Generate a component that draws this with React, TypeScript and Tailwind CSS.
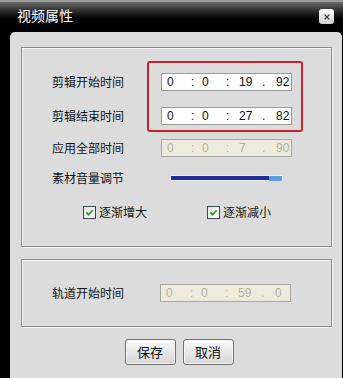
import type { ReactNode } from 'react';

const cjk = { fontFamily: '"Noto Sans CJK SC", "Liberation Sans", sans-serif' };
const num = { fontFamily: '"Liberation Sans", Arial, sans-serif' };

function TimeField({ parts, disabled }: { parts: string[]; disabled?: boolean }) {
  const [h, m, s, f] = parts;
  return (
    <div
      style={num}
      className={
        'flex h-[18px] w-[131px] items-center border text-[12px] leading-none ' +
        (disabled
          ? 'border-[#a8a8a0] bg-[#eeebdd] text-[#b3b0a4]'
          : 'border-[#9a9a9a] bg-white text-[#111]')
      }
    >
      <span className="w-[29px] pl-[5px]">{h}</span>
      <span className="w-[11px]">:</span>
      <span className="w-[24px]">{m}</span>
      <span className="w-[13px]">:</span>
      <span className="w-[23px]">{s}</span>
      <span className="w-[14px]">.</span>
      <span>{f}</span>
    </div>
  );
}

function Label({ children }: { children: ReactNode }) {
  return (
    <div style={cjk} className="h-[18px] text-[12px] leading-[18px] text-[#151515]">
      {children}
    </div>
  );
}

function Check({ label }: { label: string }) {
  return (
    <div className="flex items-center gap-[3px]">
      <div className="flex h-[13px] w-[13px] items-center justify-center border border-[#3c4a52] bg-gradient-to-br from-[#e4e4e4] to-white">
        <svg viewBox="0 0 10 10" className="h-[9px] w-[9px]">
          <path d="M1.5 5 L4 7.5 L8.5 2.5" fill="none" stroke="#2f9a2f" strokeWidth="2" />
        </svg>
      </div>
      <span style={cjk} className="text-[12px] leading-[18px] text-[#151515]">
        {label}
      </span>
    </div>
  );
}

function Button({ children }: { children: ReactNode }) {
  return (
    <button
      style={cjk}
      className="h-[26px] w-[51px] rounded-[3px] border border-[#727272] bg-gradient-to-b from-[#fafafa] to-[#d6d6d6] text-[13px] text-[#111] shadow-[inset_0_0_0_1px_#f4f4f4]"
    >
      {children}
    </button>
  );
}

export default function App() {
  return (
    <div className="flex h-[378px] w-[343px] flex-col overflow-hidden bg-black">
      {/* title bar */}
      <div className="flex h-[32px] shrink-0 items-start justify-between border-t-2 border-[#9a9a9a] bg-gradient-to-b from-[#6a6a6a] via-[#0a0a0a] to-black pl-[17px] pr-[9px]">
        <span style={cjk} className="mt-[4px] text-[14px] leading-[18px] text-white">
          视频属性
        </span>
        <div className="mt-[7px] flex h-[15px] w-[15px] items-center justify-center rounded-[3px] bg-gradient-to-b from-white to-[#cfcfcf]">
          <svg viewBox="0 0 10 10" className="h-[8px] w-[8px]">
            <path d="M2 2 L8 8 M8 2 L2 8" stroke="#333" strokeWidth="1.6" />
          </svg>
        </div>
      </div>

      {/* body */}
      <div className="ml-[10px] mr-[1px] flex flex-1 flex-col rounded-t-[5px] bg-[#dcdcdc] pl-[11px] pr-[10px] pt-[15px]">
        {/* group 1 */}
        <div className="flex h-[200px] flex-col border border-[#8a8a8a] pl-[30px] pt-[13px] shadow-[inset_1px_1px_0_#f6f6f6,1px_1px_0_#f6f6f6]">
          <div className="flex">
            <div className="flex w-[95px] flex-col gap-[16px] pt-[12px]">
              <Label>剪辑开始时间</Label>
              <Label>剪辑结束时间</Label>
            </div>
            <div className="flex h-[71px] w-[156px] flex-col gap-[16px] rounded-[3px] border-2 border-[#c8232c] pl-[12px] pt-[10px]">
              <TimeField parts={['0', '0', '19', '92']} />
              <TimeField parts={['0', '0', '27', '82']} />
            </div>
          </div>

          <div className="mt-[7px] flex items-center">
            <div className="w-[109px]">
              <Label>应用全部时间</Label>
            </div>
            <TimeField parts={['0', '0', '7', '90']} disabled />
          </div>

          <div className="mt-[12px] flex items-center">
            <div className="w-[118px]">
              <Label>素材音量调节</Label>
            </div>
            <div className="flex h-[6px] items-center rounded-[2px] bg-[#e8eef8] p-[1px]">
              <div className="h-[4px] w-[98px] bg-[#1d2f96]" />
              <div className="h-[5px] w-[13px] rounded-[1px] bg-[#5d9ce2]" />
            </div>
          </div>

          <div className="mt-[16px] flex pl-[31px]">
            <div className="w-[124px]">
              <Check label="逐渐增大" />
            </div>
            <Check label="逐渐减小" />
          </div>
        </div>

        {/* group 2 */}
        <div className="mt-[12px] flex h-[68px] items-center border border-[#8a8a8a] pl-[30px] shadow-[inset_1px_1px_0_#f6f6f6,1px_1px_0_#f6f6f6]">
          <div className="w-[108px]">
            <Label>轨道开始时间</Label>
          </div>
          <TimeField parts={['0', '0', '59', '0']} disabled />
        </div>

        <div className="mt-[12px] flex justify-center gap-[7px] pl-[5px]">
          <Button>保存</Button>
          <Button>取消</Button>
        </div>
      </div>
    </div>
  );
}
